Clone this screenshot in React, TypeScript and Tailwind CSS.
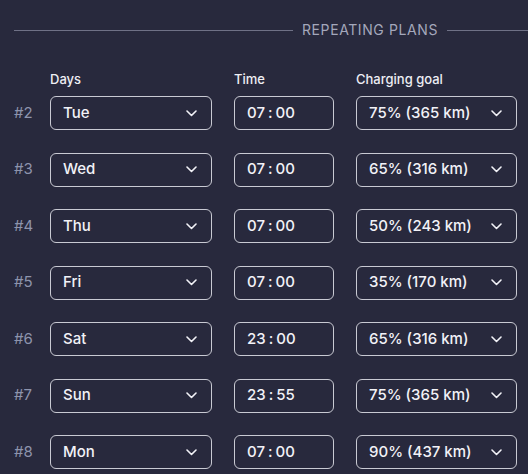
import React from 'react';

const plans = [
  { n: 2, day: 'Tue', time: ['07', '00'], goal: '75% (365 km)' },
  { n: 3, day: 'Wed', time: ['07', '00'], goal: '65% (316 km)' },
  { n: 4, day: 'Thu', time: ['07', '00'], goal: '50% (243 km)' },
  { n: 5, day: 'Fri', time: ['07', '00'], goal: '35% (170 km)' },
  { n: 6, day: 'Sat', time: ['23', '00'], goal: '65% (316 km)' },
  { n: 7, day: 'Sun', time: ['23', '55'], goal: '75% (365 km)' },
  { n: 8, day: 'Mon', time: ['07', '00'], goal: '90% (437 km)' },
];

function Chevron() {
  return (
    <svg width="11" height="7" viewBox="0 0 11 7" fill="none" className="shrink-0">
      <path d="M1 1l4.5 4.5L10 1" stroke="#f2f2f7" strokeWidth="1.6" strokeLinecap="round" strokeLinejoin="round" />
    </svg>
  );
}

function Box({ width, children, chevron }: { width: string; children: React.ReactNode; chevron?: boolean }) {
  return (
    <div
      className={`flex h-[34px] items-center justify-between rounded-md border border-[#c9cad3] pl-[12px] pr-[14px] ${width}`}
    >
      <span className="text-[15px] font-medium text-[#f2f2f7]">{children}</span>
      {chevron && <Chevron />}
    </div>
  );
}

export default function App() {
  return (
    <div
      className="h-[474px] w-[528px] overflow-hidden bg-[#28293d] pl-[14px]"
      style={{ fontFamily: 'Inter, "Noto Sans", sans-serif' }}
    >
      <div className="flex items-center pt-[20px]">
        <div className="h-px flex-1 bg-[#6f7186]" />
        <span className="px-[9px] text-[14px] leading-[20px] tracking-[0.6px] text-[#a4a7bb]">REPEATING PLANS</span>
        <div className="h-px w-[81px] bg-[#6f7186]" />
      </div>

      <div className="mt-[31px] mb-[9px] flex text-[13px] font-medium leading-[16px] text-[#eeeef4]">
        <div className="w-[36px]" />
        <div className="w-[184px]">Days</div>
        <div className="w-[122px]">Time</div>
        <div>Charging goal</div>
      </div>

      <div className="flex flex-col gap-[22.5px]">
        {plans.map((p) => (
          <div key={p.n} className="flex items-center">
            <div className="w-[36px] text-[15px] text-[#8e94ad]">#{p.n}</div>
            <Box width="w-[162px]" chevron>
              {p.day}
            </Box>
            <div className="w-[22px]" />
            <Box width="w-[100px]">
              {p.time[0]}
              <span className="mx-[3px]">:</span>
              {p.time[1]}
            </Box>
            <div className="w-[22px]" />
            <Box width="w-[161px]" chevron>
              {p.goal}
            </Box>
          </div>
        ))}
      </div>
    </div>
  );
}
